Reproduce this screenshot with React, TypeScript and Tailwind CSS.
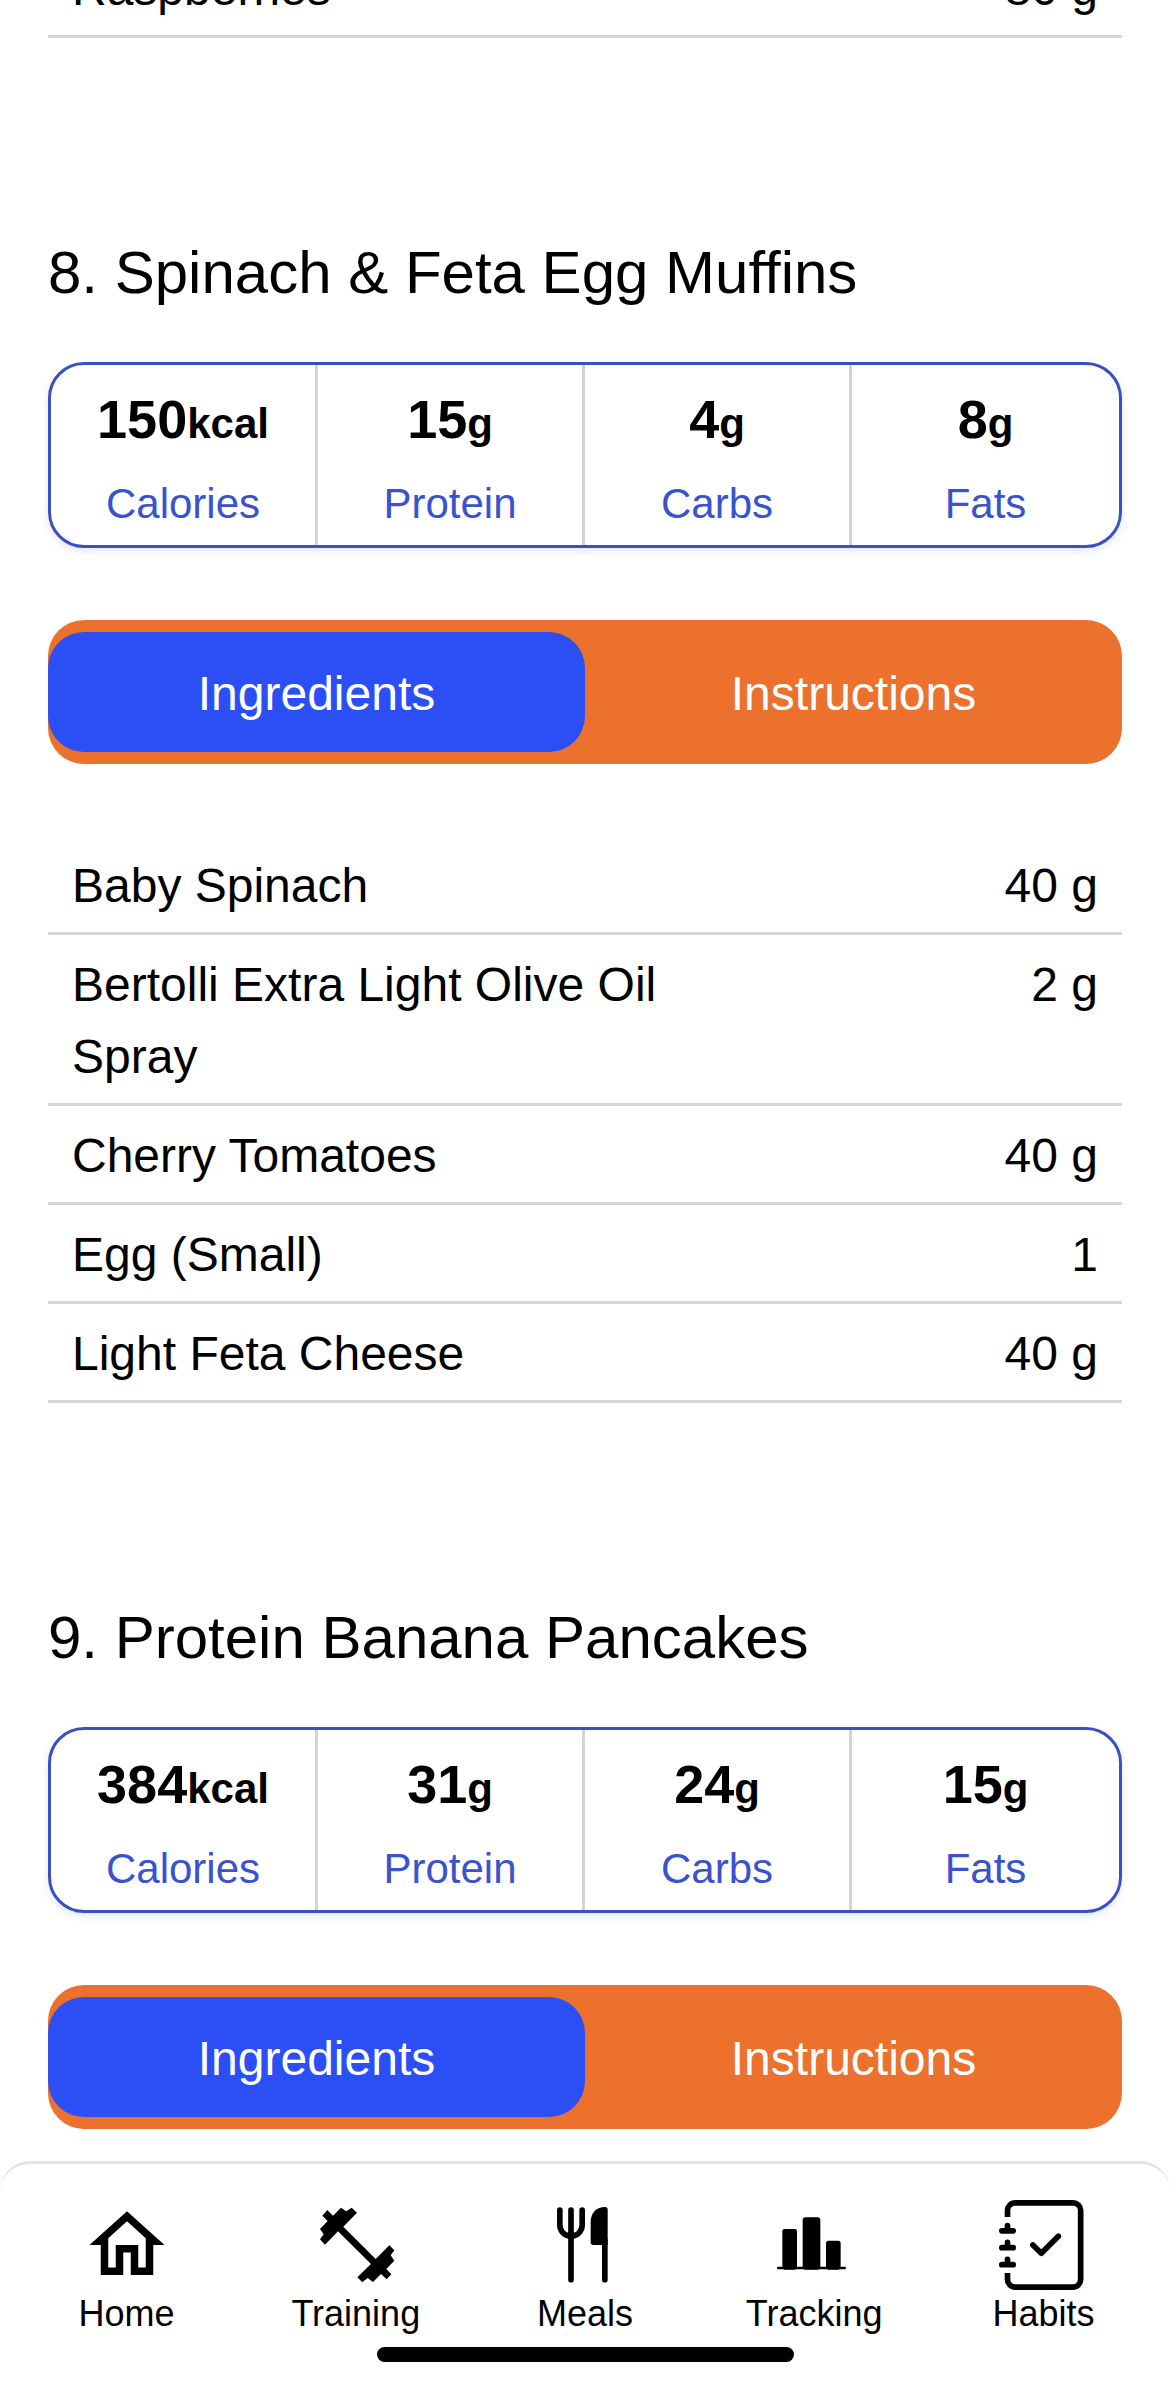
import { useState } from "react";
import type { ReactNode } from "react";

type Ingredient = { name: string; amount: string };
type Meal = {
  title: string;
  macros: { value: string; unit: string; label: string }[];
  ingredients: Ingredient[];
};

const macros = (kcal: string, protein: string, carbs: string, fats: string) => [
  { value: kcal, unit: "kcal", label: "Calories" },
  { value: protein, unit: "g", label: "Protein" },
  { value: carbs, unit: "g", label: "Carbs" },
  { value: fats, unit: "g", label: "Fats" },
];

const meals: Meal[] = [
  {
    title: "8. Spinach & Feta Egg Muffins",
    macros: macros("150", "15", "4", "8"),
    ingredients: [
      { name: "Baby Spinach", amount: "40 g" },
      { name: "Bertolli Extra Light Olive Oil Spray", amount: "2 g" },
      { name: "Cherry Tomatoes", amount: "40 g" },
      { name: "Egg (Small)", amount: "1" },
      { name: "Light Feta Cheese", amount: "40 g" },
    ],
  },
  {
    title: "9. Protein Banana Pancakes",
    macros: macros("384", "31", "24", "15"),
    ingredients: [],
  },
];

function IngredientTable({ items }: { items: Ingredient[] }) {
  return (
    <table className="w-full border-separate border-spacing-0 text-[48px] leading-[72px]">
      <tbody>
        {items.map((item) => (
          <tr key={item.name}>
            <td className="w-3/5 border-b-3 border-[#d6d6d6] pt-[14px] pb-[10px] pl-6 align-top">
              {item.name}
            </td>
            <td className="border-b-3 border-[#d6d6d6] pt-[14px] pr-6 pb-[10px] text-right align-top">
              {item.amount}
            </td>
          </tr>
        ))}
      </tbody>
    </table>
  );
}

function Tabs() {
  const [active, setActive] = useState("Ingredients");
  return (
    <div role="tablist" className="mt-[72px] flex rounded-[36px] bg-[#ec712d] py-3">
      {["Ingredients", "Instructions"].map((tab) => (
        <button
          key={tab}
          type="button"
          role="tab"
          aria-selected={active === tab}
          onClick={() => setActive(tab)}
          className={
            active === tab
              ? "flex-1 rounded-[36px] bg-[#2b4ff5] pt-[26px] pb-[22px] text-[48px] leading-[72px] text-white"
              : "flex-1 rounded-[36px] pt-[26px] pb-[22px] text-[48px] leading-[72px] text-white"
          }
        >
          {tab}
        </button>
      ))}
    </div>
  );
}

function MealSection({ meal }: { meal: Meal }) {
  return (
    <section className="pt-[190px]">
      <h2 className="text-[60px] leading-[90px]">{meal.title}</h2>
      <dl className="mt-11 grid grid-cols-4 rounded-[36px] border-3 border-[#3950c2] shadow-[0_3px_9px_rgba(40,80,140,0.14)]">
        {meal.macros.map((m) => (
          <div
            key={m.label}
            className="flex flex-col-reverse gap-3 border-r-3 border-[#d3d4d6] pt-[14px] pb-[10px] text-center last:border-r-0"
          >
            <dt className="text-[42px] leading-[63px] text-[#3952cd]">{m.label}</dt>
            <dd className="text-[54px] leading-[81px] font-bold">
              {m.value}
              <span className="text-[42px] leading-none">{m.unit}</span>
            </dd>
          </div>
        ))}
      </dl>
      <Tabs />
      {meal.ingredients.length > 0 && (
        <div className="mt-[72px]">
          <IngredientTable items={meal.ingredients} />
        </div>
      )}
    </section>
  );
}

const iconClass = "size-[90px]";

const navItems: { label: string; icon: ReactNode }[] = [
  {
    label: "Home",
    icon: (
      <svg viewBox="0 0 24 24" className={iconClass} fill="currentColor" aria-hidden="true">
        <path d="M12 5.69l5 4.5V18h-2v-6H9v6H7v-7.81l5-4.5M12 3L2 12h3v8h6v-6h2v6h6v-8h3L12 3z" />
      </svg>
    ),
  },
  {
    label: "Training",
    icon: (
      <svg viewBox="123 210 270 270" className={iconClass} fill="currentColor" aria-hidden="true">
        <path d="M172 240L189 257L213 233L229 244L245 233L261 248L220 290L317 387L358 346L373 361L362 376L373 392L349 417L364 433L350 448L333 432L309 456L293 444L277 457L262 442L303 402L204 304L165 344L150 328L161 313L150 297L173 273L157 257Z" />
      </svg>
    ),
  },
  {
    label: "Meals",
    icon: (
      <svg viewBox="120 210 270 270" className={iconClass} aria-hidden="true">
        <path
          d="M179.5 240V285A33.5 33.5 0 0 0 246.5 285V240M213 240V449M314.5 330V449"
          fill="none"
          stroke="currentColor"
          strokeWidth="17"
          strokeLinecap="round"
        />
        <path
          d="M315 231Q323 231 323 239V345H280Q272 345 272 337V276C272 248 290 231 315 231Z"
          fill="currentColor"
        />
      </svg>
    ),
  },
  {
    label: "Tracking",
    icon: (
      <svg viewBox="207 210 270 270" className={iconClass} fill="currentColor" aria-hidden="true">
        <rect x="231" y="410" width="207" height="8" rx="4" />
        <rect x="247" y="297" width="44" height="122" rx="7" />
        <rect x="308" y="262" width="53" height="157" rx="8" />
        <rect x="378" y="332" width="44" height="87" rx="7" />
      </svg>
    ),
  },
  {
    label: "Habits",
    icon: (
      <svg
        viewBox="204 210 270 270"
        className={iconClass}
        fill="none"
        stroke="currentColor"
        strokeWidth="17"
        aria-hidden="true"
      >
        <path d="M232.5 261V242A23 23 0 0 1 255.5 218.5H429A23 23 0 0 1 452 241.5V448A23 23 0 0 1 429 471.5H255.5A23 23 0 0 1 232.5 448V429" />
        <path
          strokeLinecap="round"
          strokeLinejoin="round"
          d="M215.5 302.5H249.5M232.5 302V286.5M215.5 353H249.5M232.5 352V337M215.5 404H249.5M232.5 403V388M308.5 345L334 370L385 319"
        />
      </svg>
    ),
  },
];

export default function App() {
  return (
    <div className="flex min-h-screen flex-col bg-white font-['Liberation_Sans',Arial,sans-serif] text-black">
      <main className="-mt-[61px] px-12 pb-8">
        <IngredientTable items={[{ name: "Raspberries", amount: "80 g" }]} />
        {meals.map((meal) => (
          <MealSection key={meal.title} meal={meal} />
        ))}
      </main>
      <footer className="sticky bottom-0 mt-auto rounded-t-[30px] border-t-3 border-[#e4e4e4] bg-white px-3 pt-9 pb-6">
        <nav className="flex">
          {navItems.map((item) => (
            <a key={item.label} href="#" className="flex flex-1 flex-col items-center text-[36px] leading-[48px]">
              {item.icon}
              {item.label}
            </a>
          ))}
        </nav>
        <div className="mx-auto mt-[9px] h-[15px] w-[417px] rounded-full bg-black" />
      </footer>
    </div>
  );
}
